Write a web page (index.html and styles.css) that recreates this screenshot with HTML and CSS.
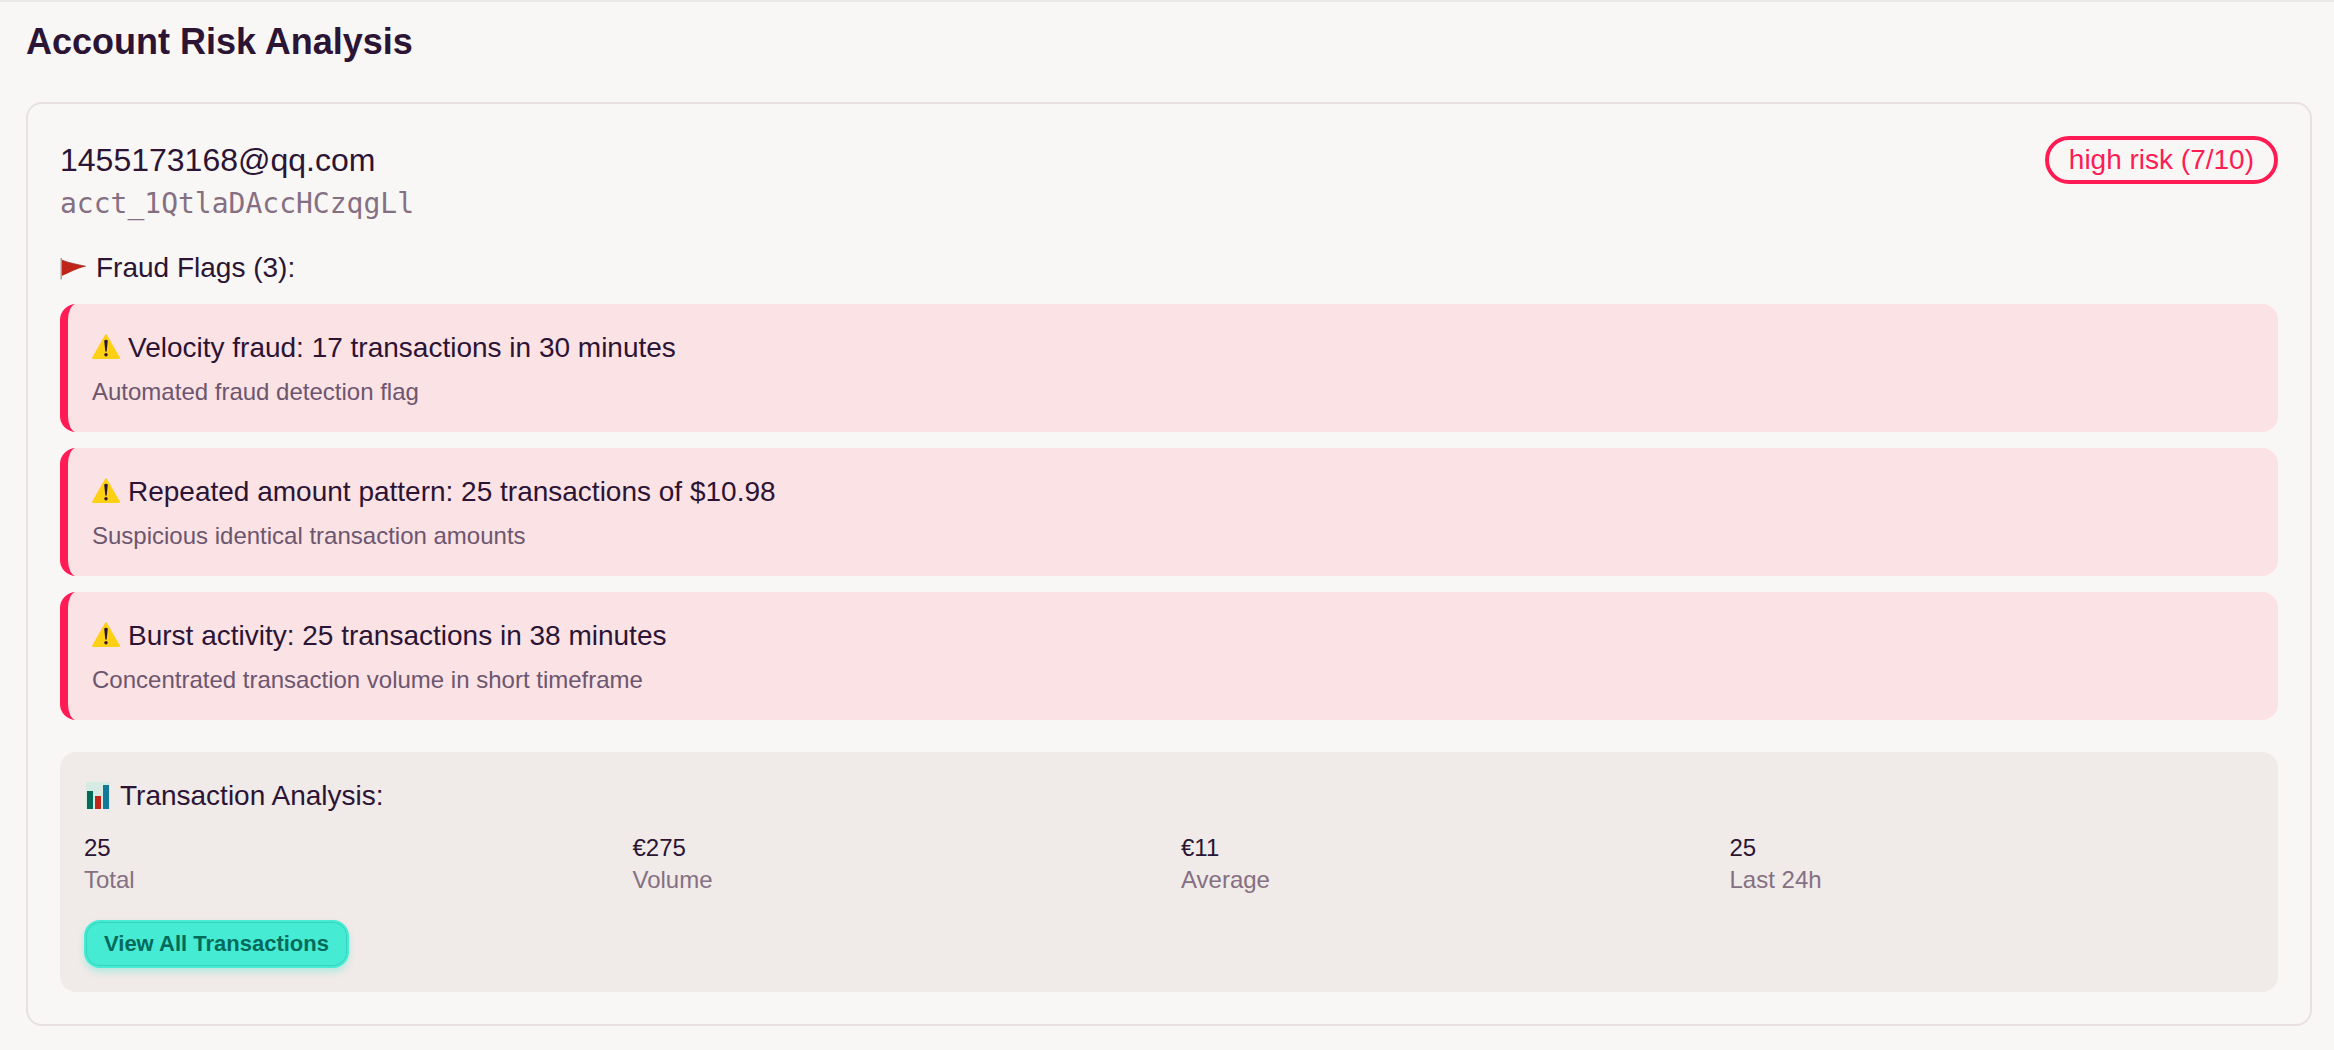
FILE: index.html
```
<!DOCTYPE html>
<html lang="en">
<head>
    <meta charset="UTF-8">
    <meta name="viewport" content="width=device-width, initial-scale=1.0">
    <title>Account Risk Analysis</title>
    <link rel="stylesheet" href="styles.css">
</head>
<body>
    <!-- Icon shared by every fraud flag -->
    <svg class="sprite" aria-hidden="true">
        <symbol id="warning" viewBox="0 0 28 28">
            <path d="M13 1 Q14 -0.6 15 1 L27.8 23.4 Q28.2 25 27 25 H1 Q-0.2 25 0.2 23.4 Z" fill="#fbd015"/>
            <path d="M12.2 6.4 Q14 5.2 15.8 6.4 L14.7 17.5 H13.3 Z" fill="#2b1434"/>
            <circle cx="14" cy="20.8" r="1.7" fill="#2b1434"/>
        </symbol>
    </svg>

    <main class="page">
        <h1 class="page-title">Account Risk Analysis</h1>

        <section class="account-card">
            <header class="account-header">
                <div class="account-info">
                    <h2 class="account-email">1455173168@qq.com</h2>
                    <p class="account-id">acct_1QtlaDAccHCzqgLl</p>
                </div>
                <span class="risk-badge">high risk (7/10)</span>
            </header>

            <h3 class="section-title">
                <svg class="icon" viewBox="0 0 28 28" aria-hidden="true">
                    <path d="M1.7 6 C9 9 18 10.5 26 12.3 C17 14.5 9 19 1.7 22 Z" fill="#bf2518"/>
                    <path d="M1.2 4 V25.5" stroke="#9b8d95" stroke-width="1.2"/>
                    <path d="M1.7 6 C9 9 18 10.5 26 12.3" fill="none" stroke="#8e3f45" stroke-width="0.7"/>
                </svg>
                Fraud Flags (3):
            </h3>
            <ul class="flags">
                <li class="flag">
                    <h4 class="flag-title"><svg class="icon" aria-hidden="true"><use href="#warning"/></svg>Velocity fraud: 17 transactions in 30 minutes</h4>
                    <p class="flag-text">Automated fraud detection flag</p>
                </li>
                <li class="flag">
                    <h4 class="flag-title"><svg class="icon" aria-hidden="true"><use href="#warning"/></svg>Repeated amount pattern: 25 transactions of $10.98</h4>
                    <p class="flag-text">Suspicious identical transaction amounts</p>
                </li>
                <li class="flag">
                    <h4 class="flag-title"><svg class="icon" aria-hidden="true"><use href="#warning"/></svg>Burst activity: 25 transactions in 38 minutes</h4>
                    <p class="flag-text">Concentrated transaction volume in short timeframe</p>
                </li>
            </ul>

            <section class="analysis">
                <h3 class="section-title">
                    <svg class="icon" viewBox="0 0 28 28" aria-hidden="true">
                        <rect x="2" y="0" width="24" height="27" fill="#d5ebe4"/>
                        <rect x="3" y="9" width="6" height="18" fill="#046b5b"/>
                        <rect x="11" y="14" width="6" height="13" fill="#bf2518"/>
                        <rect x="19" y="3" width="6" height="24" fill="#137a9b"/>
                    </svg>
                    Transaction Analysis:
                </h3>
                <dl class="stats">
                    <div class="stat">
                        <dd>25</dd>
                        <dt>Total</dt>
                    </div>
                    <div class="stat">
                        <dd>€275</dd>
                        <dt>Volume</dt>
                    </div>
                    <div class="stat">
                        <dd>€11</dd>
                        <dt>Average</dt>
                    </div>
                    <div class="stat">
                        <dd>25</dd>
                        <dt>Last 24h</dt>
                    </div>
                </dl>
                <button type="button" class="btn">View All Transactions</button>
            </section>
        </section>
    </main>
</body>
</html>
```
FILE: styles.css
```
* {
    margin: 0;
    padding: 0;
    box-sizing: border-box;
}

body {
    font-family: 'Liberation Sans', Arial, sans-serif;
    font-size: 24px;
    line-height: 32px;
    background: #f9f7f5;
    color: #2b1434;
}

h1, h2, h3, h4 {
    font-weight: 400;
}

.sprite {
    display: none;
}

.page {
    border-top: 2px solid #ebe8e6;
    padding: 16px 22px 16px 26px;
}

.page-title {
    font-size: 36px;
    line-height: 48px;
    font-weight: 700;
    margin-bottom: 36px;
}

.account-card {
    border: 2px solid #e9e0e1;
    border-radius: 16px;
    padding: 32px;
}

.account-header {
    display: flex;
    justify-content: space-between;
    align-items: flex-start;
    margin-bottom: 24px;
}

.account-email {
    font-size: 32px;
    line-height: 48px;
}

.account-id {
    font-family: 'DejaVu Sans Mono', monospace;
    font-size: 28px;
    line-height: 40px;
    color: #857083;
}

.risk-badge {
    border: 4px solid #ff1c55;
    border-radius: 24px;
    padding: 4px 20px;
    font-size: 28px;
    line-height: 32px;
    color: #ff1c55;
}

.section-title,
.flag-title {
    display: flex;
    align-items: center;
    gap: 8px;
    font-size: 28px;
    line-height: 40px;
}

.section-title {
    margin-bottom: 16px;
}

.icon {
    width: 28px;
    height: 28px;
    flex-shrink: 0;
}

.flags {
    display: flex;
    flex-direction: column;
    gap: 16px;
    list-style: none;
    margin-bottom: 32px;
}

.flag {
    background: #fbe2e4;
    border-left: 8px solid #ff1c55;
    border-radius: 16px;
    padding: 24px;
}

.flag-text {
    margin-top: 8px;
    color: #6c566f;
}

.analysis {
    background: #f0eae8;
    border-radius: 16px;
    padding: 24px;
}

.stats {
    display: grid;
    grid-template-columns: repeat(4, 1fr);
    gap: 24px;
    margin-bottom: 24px;
}

.stat dt {
    color: #857083;
}

.btn {
    display: block;
    font-family: inherit;
    font-size: 22px;
    line-height: 28px;
    font-weight: 700;
    color: #046b5b;
    background: #46ebd3;
    border: 2px solid #46ebd3;
    border-radius: 16px;
    padding: 8px 18px;
    box-shadow: inset 0 0 0 1px #3ad3bd, 0 4px 6px rgba(70, 235, 211, 0.35);
    cursor: pointer;
}
```
